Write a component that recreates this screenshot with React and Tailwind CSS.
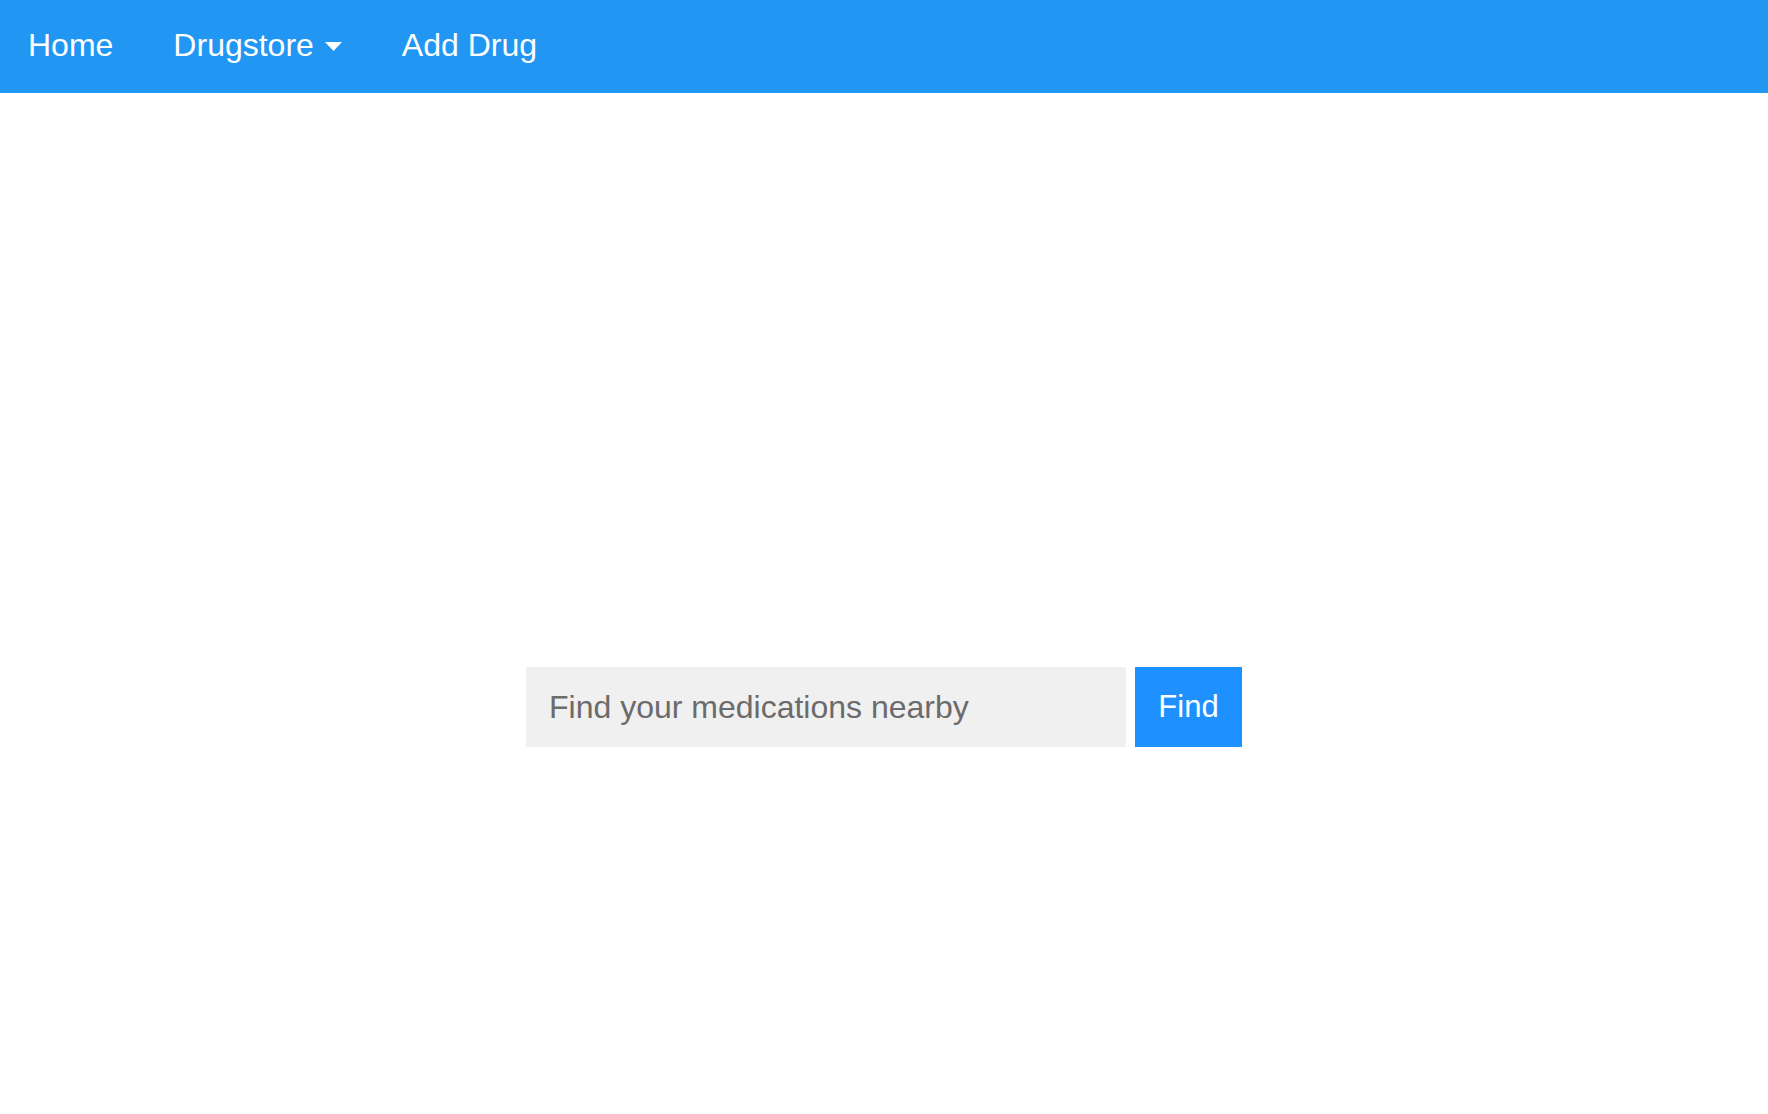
export default function App() {
  return (
    <div className="min-h-[1114px] bg-white" style={{ fontFamily: '"Liberation Sans", Arial, sans-serif' }}>
      <nav className="h-[93px] bg-[#2196f3] flex items-center pb-[3px]">
        <a className="pl-[28px] pr-[28px] text-[32px] text-white leading-none">Home</a>
        <a className="pl-[32px] pr-[30px] text-[32px] text-white leading-none flex items-center">
          Drugstore
          <svg width="17" height="9" viewBox="0 0 17 9" className="ml-[11px] mt-[2px]">
            <path d="M0 0 L17 0 L8.5 9 Z" fill="white" />
          </svg>
        </a>
        <a className="px-[30px] text-[32px] text-white leading-none">Add Drug</a>
      </nav>
      <div className="flex justify-center pt-[574px]">
        <div className="flex gap-[9px]">
          <input
            placeholder="Find your medications nearby"
            className="w-[600px] h-[80px] bg-[#f0f0f0] pl-[23px] text-[32px] text-[#555] placeholder:text-[#6b6b6b] outline-none"
            style={{ fontFamily: '"Liberation Sans", Arial, sans-serif' }}
          />
          <button className="w-[107px] h-[80px] bg-[#1e90ff] text-white text-[31px]">Find</button>
        </div>
      </div>
    </div>
  );
}
